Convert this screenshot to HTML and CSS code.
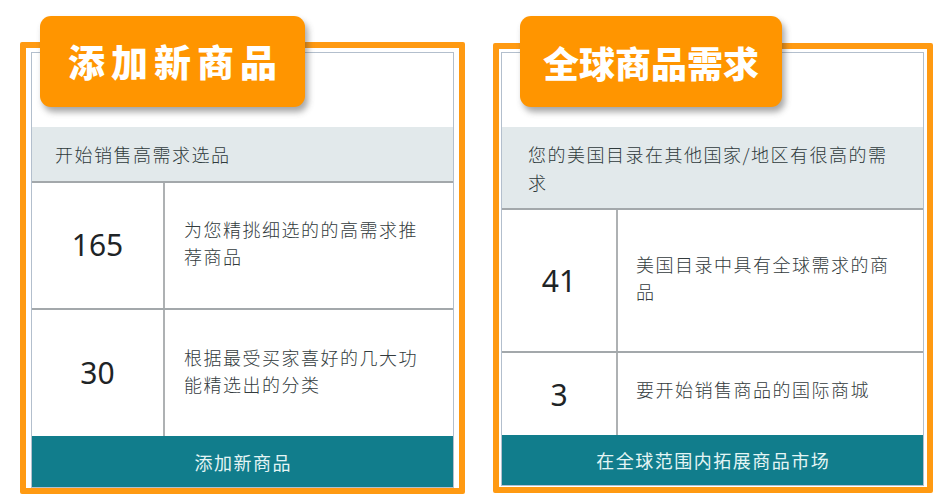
FILE: index.html
```html
<!DOCTYPE html>
<html lang="zh-CN">
<head>
<meta charset="utf-8">
<title>商品需求</title>
<link rel="stylesheet" href="styles.css">
</head>
<body>
<div class="page">
  <section class="card card-left">
    <div class="tab tab-left"><span class="tab-text spaced">添加新商品</span></div>
    <div class="inner">
      <div class="top-space"></div>
      <div class="band">开始销售高需求选品</div>
      <div class="row row-a">
        <div class="num">165</div>
        <div class="desc">为您精挑细选的的高需求推荐商品</div>
      </div>
      <div class="row row-b">
        <div class="num">30</div>
        <div class="desc">根据最受买家喜好的几大功能精选出的分类</div>
      </div>
      <div class="action">添加新商品</div>
    </div>
  </section>
  <section class="card card-right">
    <div class="tab tab-right"><span class="tab-text">全球商品需求</span></div>
    <div class="inner">
      <div class="top-space"></div>
      <div class="band">您的美国目录在其他国家/地区有很高的需求</div>
      <div class="row row-a">
        <div class="num">41</div>
        <div class="desc">美国目录中具有全球需求的商品</div>
      </div>
      <div class="row row-b">
        <div class="num">3</div>
        <div class="desc">要开始销售商品的国际商城</div>
      </div>
      <div class="action">在全球范围内拓展商品市场</div>
    </div>
  </section>
</div>
</body>
</html>
```
FILE: styles.css
```css
* { box-sizing: border-box; }
html, body { margin: 0; padding: 0; background: #ffffff; }
body {
  width: 950px;
  height: 504px;
  overflow: hidden;
  font-family: "Noto Sans CJK SC", "Noto Sans", sans-serif;
  color: #333333;
}
.page {
  display: flex;
  align-items: flex-start;
  padding: 42px 0 0 20px;
  gap: 28px;
}
.card {
  position: relative;
  border: 6px solid #ff9a12;
  border-radius: 2px;
  background: #ffffff;
}
.card-left { width: 445px; padding: 4px 5px 0 5px; }
.card-right { width: 440px; padding: 3px 3px 1px 2px; margin-top: 1px; }

.inner {
  border: 1px solid #b3bfcd;
  display: flex;
  flex-direction: column;
}
.top-space { height: 74px; }

.tab {
  position: absolute;
  top: -27px;
  height: 91px;
  background: #ff9500;
  border-radius: 11px;
  box-shadow: 3px 5px 6px rgba(60, 60, 60, 0.45);
  display: flex;
  align-items: center;
  justify-content: center;
  z-index: 2;
}
.tab-left { left: 14px; width: 265px; top: -32px; }
.tab-right { left: 21px; width: 262px; top: -33px; }
.tab-text {
  color: #ffffff;
  font-family: "Noto Sans CJK SC", sans-serif;
  font-weight: 900;
  font-size: 36px;
  line-height: 1;
}
.spaced {
  font-size: 37px;
  letter-spacing: 6px;
  margin-right: -6px;
}

.band {
  background: #e2e9eb;
  border-bottom: 2px solid #a3a8ab;
  font-size: 18px;
  letter-spacing: 1.5px;
  line-height: 28px;
  padding: 13px 26px 13px 23px;
  font-weight: 300;
  color: #2f3a3c;
}
.card-right .band { padding-left: 26px; height: 83px; }

.row {
  display: flex;
  border-bottom: 2px solid #a3a8ab;
}
.row-b { border-bottom: none; }
.num {
  flex: none;
  display: flex;
  align-items: center;
  justify-content: center;
  border-right: 2px solid #aeb1b3;
  font-family: "Noto Sans", "Open Sans", sans-serif;
  font-size: 30px;
  color: #1e2426;
}
.desc {
  flex: 1;
  display: flex;
  align-items: center;
  font-size: 18px;
  letter-spacing: 1.5px;
  line-height: 27px;
  font-weight: 300;
  color: #333b3d;
  padding-bottom: 5px;
}
.card-left .num { width: 133px; padding-bottom: 2px; }
.card-left .desc { padding-left: 19px; padding-right: 30px; }
.card-left .row-a { height: 127px; }
.card-left .row-b { height: 126px; }

.card-right .num { width: 116px; }
.card-right .desc { padding-left: 18px; padding-right: 25px; }
.card-right .row-a { height: 143px; }
.card-right .row-b { height: 82px; }
.card-right .row-b .desc { padding-bottom: 10px; }

.action {
  background: #117d8c;
  color: #e4f5f5;
  font-size: 18px;
  letter-spacing: 1.5px;
  height: 51px;
  display: flex;
  align-items: center;
  justify-content: center;
  padding-left: 1.5px;
}
.card-right .action { height: 50px; }
```
